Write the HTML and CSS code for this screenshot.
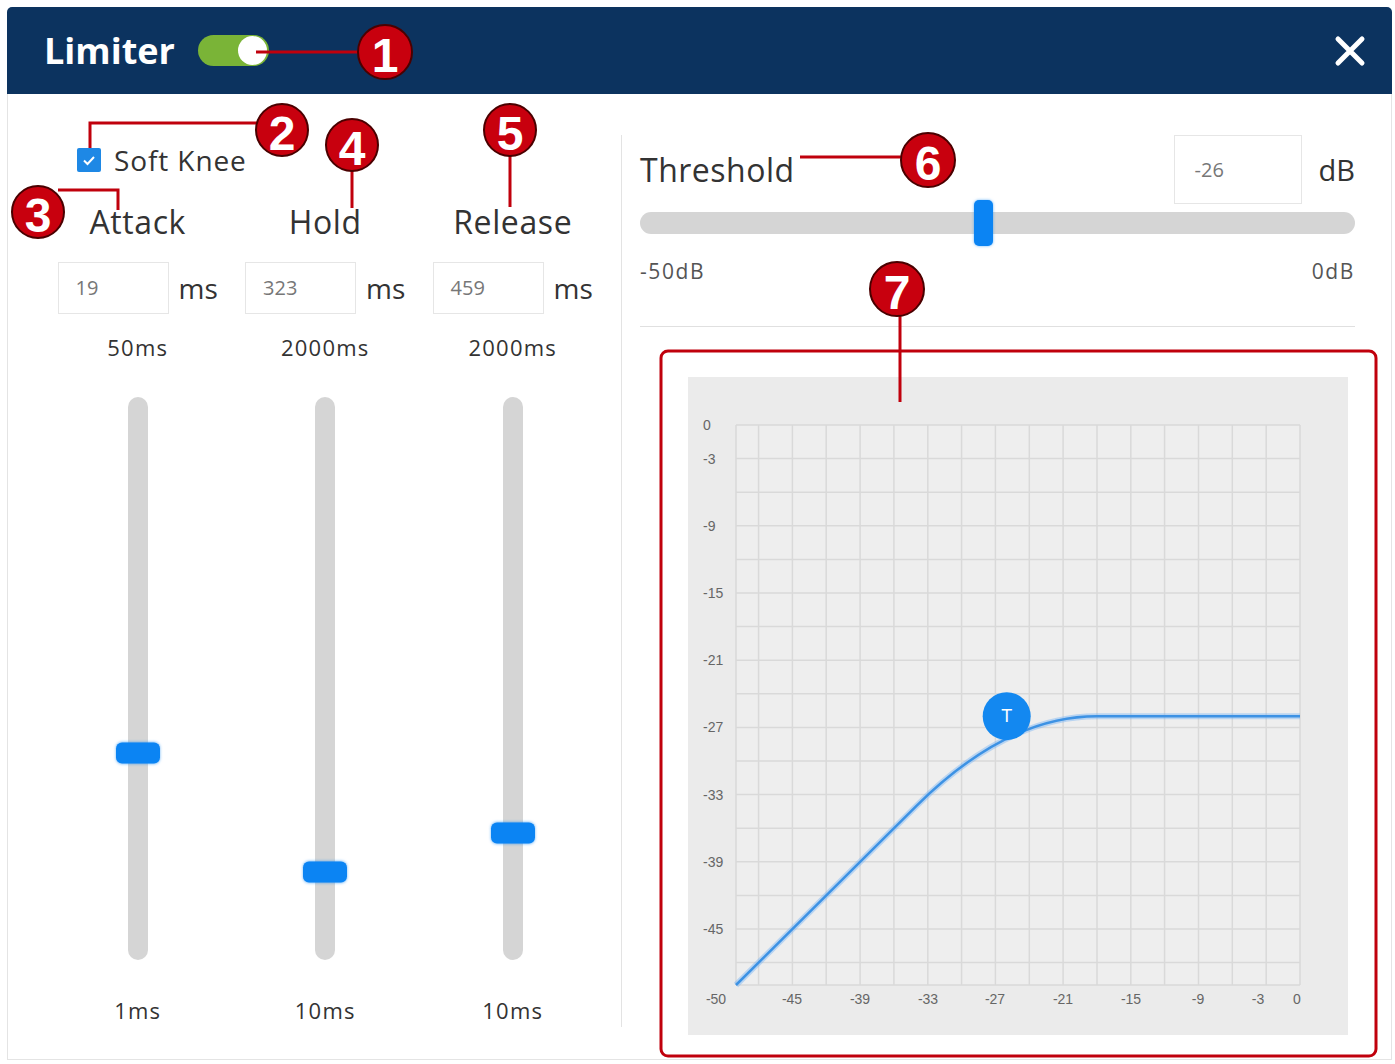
FILE: index.html
```html
<!DOCTYPE html>
<html lang="en">
<head>
    <meta charset="UTF-8">
    <meta name="viewport" content="width=device-width, initial-scale=1.0">
    <title>Limiter</title>
    <link rel="stylesheet" href="styles.css">
</head>
<body>
    <div class="dialog">
        <div class="dialog-header">
            <span class="dialog-title">Limiter</span>
            <span class="toggle"><span class="toggle-knob"></span></span>
            <svg class="close-btn" viewBox="0 0 34 34">
                <path d="M5 5L29 29M29 5L5 29" stroke="#fff" stroke-width="5" stroke-linecap="round"/>
            </svg>
        </div>

        <div class="dialog-body">
            <!-- attack / hold / release -->
            <div class="timing-panel">
                <div class="soft-knee">
                    <span class="checkbox">
                        <svg viewBox="0 0 24 24"><path d="M7 12.5l3.5 3.5L17 9" stroke="#fff" stroke-width="2" fill="none"/></svg>
                    </span>
                    Soft Knee
                </div>
                <div class="timing-columns">
                    <div class="timing-col">
                        <div class="timing-name">Attack</div>
                        <div class="value-row"><div class="value-box">19</div><span class="unit">ms</span></div>
                        <div class="range-max">50ms</div>
                        <div class="vslider"><div class="vslider-thumb" style="bottom: 36.7%"></div></div>
                        <div class="range-min">1ms</div>
                    </div>
                    <div class="timing-col">
                        <div class="timing-name">Hold</div>
                        <div class="value-row"><div class="value-box">323</div><span class="unit">ms</span></div>
                        <div class="range-max">2000ms</div>
                        <div class="vslider"><div class="vslider-thumb" style="bottom: 15.7%"></div></div>
                        <div class="range-min">10ms</div>
                    </div>
                    <div class="timing-col">
                        <div class="timing-name">Release</div>
                        <div class="value-row"><div class="value-box">459</div><span class="unit">ms</span></div>
                        <div class="range-max">2000ms</div>
                        <div class="vslider"><div class="vslider-thumb" style="bottom: 22.6%"></div></div>
                        <div class="range-min">10ms</div>
                    </div>
                </div>
            </div>

            <!-- threshold + transfer curve -->
            <div class="threshold-panel">
                <div class="threshold-head">
                    <span class="threshold-label">Threshold</span>
                    <div class="threshold-box">-26</div>
                    <span class="db-unit">dB</span>
                </div>
                <div class="hslider"><div class="hslider-thumb" style="left: 48%"></div></div>
                <div class="range-labels"><span>-50dB</span><span>0dB</span></div>
                <div class="divider"></div>

                <div class="chart">
                    <svg viewBox="0 0 660 658" width="660" height="658">
                        <rect x="48" y="48" width="564" height="560" fill="#eeeeee"/>
                        <path class="grid" d="M48 48V608M70.6 48V608M104.4 48V608M138.2 48V608M172.1 48V608M205.9 48V608M239.8 48V608M273.6 48V608M307.4 48V608M341.3 48V608M375.1 48V608M409 48V608M442.8 48V608M476.6 48V608M510.5 48V608M544.3 48V608M578.2 48V608M612 48V608
                            M48 48H612M48 81.6H612M48 115.2H612M48 148.8H612M48 182.4H612M48 216H612M48 249.6H612M48 283.2H612M48 316.8H612M48 350.4H612M48 384H612M48 417.6H612M48 451.2H612M48 484.8H612M48 518.4H612M48 552H612M48 585.6H612M48 608H612"/>

                        <g class="axis-y">
                            <text x="15" y="48">0</text>
                            <text x="15" y="82">-3</text>
                            <text x="15" y="149">-9</text>
                            <text x="15" y="216">-15</text>
                            <text x="15" y="283">-21</text>
                            <text x="15" y="350">-27</text>
                            <text x="15" y="418">-33</text>
                            <text x="15" y="485">-39</text>
                            <text x="15" y="552">-45</text>
                        </g>
                        <g class="axis-x">
                            <text x="28" y="622">-50</text>
                            <text x="104" y="622">-45</text>
                            <text x="172" y="622">-39</text>
                            <text x="240" y="622">-33</text>
                            <text x="307" y="622">-27</text>
                            <text x="375" y="622">-21</text>
                            <text x="443" y="622">-15</text>
                            <text x="510" y="622">-9</text>
                            <text x="570" y="622">-3</text>
                            <text x="609" y="622">0</text>
                        </g>

                        <path class="curve-glow" d="M48 608L228.5 428.8Q318.7 339.2 409 339.2L612 339.2"/>
                        <path class="curve" d="M48 608L228.5 428.8Q318.7 339.2 409 339.2L612 339.2"/>
                        <circle cx="318.7" cy="339.2" r="24" fill="#1388f0"/>
                        <text class="marker" x="318.7" y="339.2">T</text>
                    </svg>
                </div>
            </div>
        </div>
    </div>

    <!-- numbered callouts -->
    <svg class="callouts" viewBox="0 0 1395 1064" width="1395" height="1064">
        <g class="callout-line">
            <path d="M256 52H360"/>
            <path d="M90 148V123H258"/>
            <path d="M58 190H118V210"/>
            <path d="M352 170V208"/>
            <path d="M510 155V207"/>
            <path d="M800 157H903"/>
            <path d="M900 315V402"/>
            <rect x="661" y="351" width="715" height="705" rx="7"/>
        </g>
        <g class="callout-dot">
            <circle cx="385" cy="52" r="27"/>
            <circle cx="282" cy="130" r="26"/>
            <circle cx="38" cy="212" r="26"/>
            <circle cx="352" cy="145" r="26"/>
            <circle cx="510" cy="130" r="26"/>
            <circle cx="928" cy="160" r="27"/>
            <circle cx="897" cy="289" r="27"/>
        </g>
        <g class="callout-num">
            <text x="385" y="55">1</text>
            <text x="282" y="133">2</text>
            <text x="38" y="215">3</text>
            <text x="352" y="148">4</text>
            <text x="510" y="133">5</text>
            <text x="928" y="163">6</text>
            <text x="897" y="292">7</text>
        </g>
    </svg>
</body>
</html>
```

FILE: styles.css
```css
* {
    box-sizing: border-box;
}
body {
    margin: 0;
    background: #fff;
    font-family: "Open Sans", "Noto Sans", sans-serif;
    color: #333;
}
.dialog {
    width: 1385px;
    margin: 7px 0 0 7px;
}
.dialog-header {
    height: 87px;
    background: #0c335f;
    border-radius: 5px 5px 0 0;
    display: flex;
    align-items: center;
    padding: 0 25px 0 37px;
}
.dialog-title {
    color: #fff;
    font-size: 36px;
    font-weight: 700;
}
.toggle {
    position: relative;
    width: 71px;
    height: 31px;
    margin-left: 23px;
    border-radius: 16px;
    background: #7ab437;
}
.toggle-knob {
    position: absolute;
    right: 2px;
    top: 1px;
    width: 29px;
    height: 29px;
    border-radius: 50%;
    background: #fff;
}
.close-btn {
    margin-left: auto;
    width: 34px;
    height: 34px;
}
.dialog-body {
    display: flex;
    align-items: flex-start;
    height: 966px;
    border: 1px solid #e4e4e4;
    border-top: 0;
}

/* left side */
.timing-panel {
    width: 614px;
    height: 892px;
    margin-top: 41px;
    padding: 11px 0 0 36px;
    border-right: 1px solid #e3e3e3;
}
.soft-knee {
    display: flex;
    align-items: center;
    height: 28px;
    margin-left: 33px;
    font-size: 28px;
    letter-spacing: 0.9px;
}
.checkbox {
    width: 24px;
    height: 24px;
    margin-right: 13px;
    border-radius: 2px;
    background: #1e88e5;
}
.checkbox svg {
    display: block;
    width: 24px;
    height: 24px;
}
.timing-columns {
    display: grid;
    grid-template-columns: repeat(3, 187.5px);
}
.timing-col {
    display: flex;
    flex-direction: column;
    align-items: center;
}
.timing-name {
    margin-top: 30px;
    font-size: 32px;
    line-height: 36px;
    letter-spacing: 0.6px;
}
.value-row {
    display: flex;
    align-items: center;
    gap: 10px;
    height: 52px;
    margin-top: 22px;
}
.value-box {
    width: 111px;
    height: 52px;
    padding-left: 17px;
    border: 1px solid #e6e6e6;
    font-size: 20px;
    line-height: 50px;
    color: #777;
}
.unit {
    font-size: 28px;
}
.range-max,
.range-min {
    font-size: 22px;
    line-height: 30px;
    letter-spacing: 1.2px;
}
.range-max {
    margin-top: 18px;
}
.range-min {
    margin-top: 35px;
}
.vslider {
    position: relative;
    width: 20px;
    height: 563px;
    margin-top: 35px;
    border-radius: 10px;
    background: #d5d5d5;
}
.vslider-thumb {
    position: absolute;
    left: -12px;
    width: 44px;
    height: 21px;
    border-radius: 6px;
    background: #0b84f3;
    box-shadow: 0 0 3px rgba(11, 132, 243, 0.6);
    transform: translateY(50%);
}

/* right side */
.threshold-panel {
    flex: 1;
    padding: 41px 36px 0 18px;
}
.threshold-head {
    display: flex;
    align-items: center;
    height: 69px;
}
.threshold-label {
    font-size: 32px;
    letter-spacing: 0.5px;
}
.threshold-box {
    width: 128px;
    height: 69px;
    margin-left: auto;
    padding-left: 20px;
    border: 1px solid #e6e6e6;
    font-size: 20px;
    line-height: 67px;
    color: #777;
}
.db-unit {
    margin-left: 17px;
    font-size: 29px;
}
.hslider {
    position: relative;
    height: 22px;
    margin-top: 8px;
    border-radius: 11px;
    background: #d5d5d5;
}
.hslider-thumb {
    position: absolute;
    top: -12px;
    width: 19px;
    height: 46px;
    margin-left: -9px;
    border-radius: 5px;
    background: #0b84f3;
    box-shadow: 0 0 3px rgba(11, 132, 243, 0.6);
}
.range-labels {
    display: flex;
    justify-content: space-between;
    margin-top: 23px;
    font-size: 21px;
    line-height: 28px;
    letter-spacing: 1.6px;
    color: #555;
}
.divider {
    margin-top: 41px;
    border-top: 1px solid #e0e0e0;
}
.chart {
    width: 660px;
    height: 658px;
    margin: 50px 0 0 48px;
    background: #ebebeb;
}
.chart svg {
    display: block;
}
.grid {
    fill: none;
    stroke: #d9d9d9;
    stroke-width: 1.5;
}
.axis-y text,
.axis-x text {
    font-family: "Liberation Sans", sans-serif;
    font-size: 14px;
    fill: #666;
    dominant-baseline: central;
}
.axis-x text {
    text-anchor: middle;
}
.curve-glow {
    fill: none;
    stroke: rgba(120, 180, 245, 0.45);
    stroke-width: 6;
}
.curve {
    fill: none;
    stroke: #3d92e4;
    stroke-width: 2.5;
}
.marker {
    font-family: "Liberation Sans", sans-serif;
    font-size: 18px;
    fill: #fff;
    text-anchor: middle;
    dominant-baseline: central;
}

/* numbered callouts over the dialog */
.callouts {
    position: absolute;
    top: 0;
    left: 0;
    pointer-events: none;
}
.callout-line {
    fill: none;
    stroke: #c0000c;
    stroke-width: 3;
}
.callout-dot circle {
    fill: #c8000e;
    stroke: #4a0000;
    stroke-width: 2;
}
.callout-num text {
    font-family: "Liberation Sans", sans-serif;
    font-size: 48px;
    font-weight: 700;
    fill: #fff;
    text-anchor: middle;
    dominant-baseline: central;
}
```
